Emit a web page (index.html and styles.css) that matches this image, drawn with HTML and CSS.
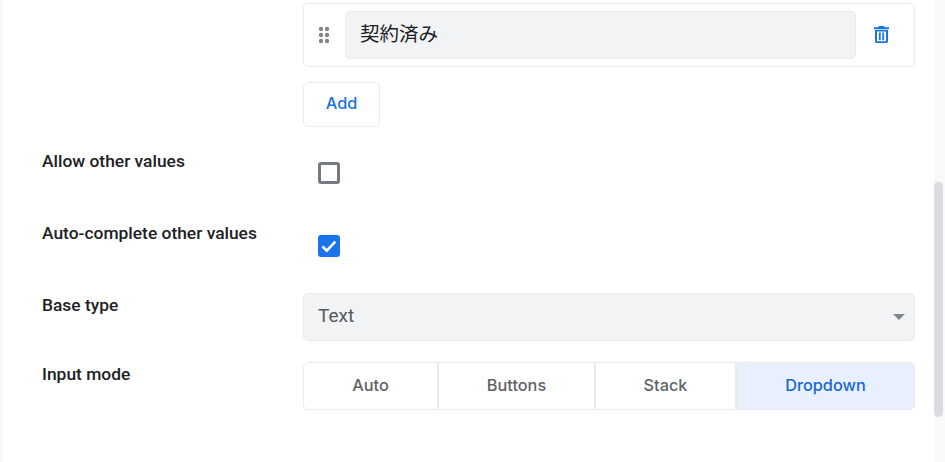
FILE: index.html
```html
<!DOCTYPE html>
<html lang="en">
<head>
<meta charset="utf-8">
<title>Column settings</title>
<link rel="stylesheet" href="styles.css">
</head>
<body>
<div class="shell">
  <main class="panel">
    <div class="row row-values">
      <div class="label"></div>
      <div class="field">
        <div class="value-card">
          <svg class="grip" width="12" height="18" viewBox="0 0 12 18" aria-hidden="true"><g fill="#80868b"><circle cx="3" cy="3" r="2.2"/><circle cx="9" cy="3" r="2.2"/><circle cx="3" cy="9" r="2.2"/><circle cx="9" cy="9" r="2.2"/><circle cx="3" cy="15" r="2.2"/><circle cx="9" cy="15" r="2.2"/></g></svg>
          <div class="value-input">契約済み</div>
          <svg class="trash" width="15" height="17" viewBox="0 0 15 17" aria-hidden="true"><path fill="#1a73e8" d="M5 0h5l.7 1.300H15v1.900H0V1.300h4.300zM1 4h13v11.200c0 1-.8 1.800-1.800 1.800H2.800C1.800 17 1 16.200 1 15.200zm2 1.400v9.600c0 .2.100.3.300.3h8.400c.2 0 .3-.1.300-.3V5.400zM4.900 6.500h1.800v7.700H4.900zm3.400 0h1.800v7.700H8.300z"/></svg>
        </div>
        <button class="add">Add</button>
      </div>
    </div>
    <div class="row row-allow">
      <div class="label">Allow other values</div>
      <div class="field"><span class="check"></span></div>
    </div>
    <div class="row row-auto">
      <div class="label">Auto-complete other values</div>
      <div class="field">
        <span class="check on"><svg width="22" height="22" viewBox="0 0 22 22" aria-hidden="true"><path d="M4.500 11.500l4.300 4.200 8.500-9" fill="none" stroke="#fff" stroke-width="2.600"/></svg></span>
      </div>
    </div>
    <div class="row row-base">
      <div class="label">Base type</div>
      <div class="field">
        <div class="select"><span class="select-text">Text</span><span class="caret"></span></div>
      </div>
    </div>
    <div class="row row-mode">
      <div class="label">Input mode</div>
      <div class="field">
        <div class="segments">
          <span class="seg seg-auto">Auto</span>
          <span class="seg seg-buttons">Buttons</span>
          <span class="seg seg-stack">Stack</span>
          <span class="seg seg-dropdown">Dropdown</span>
        </div>
      </div>
    </div>
  </main>
  <div class="track"><div class="thumb"></div></div>
</div>
</body>
</html>
```
FILE: styles.css
```css
* { box-sizing: border-box; }
html, body { margin: 0; height: 100%; overflow: hidden; }
body { background: #f8f9fa; font-family: Roboto, "Noto Sans CJK JP", sans-serif; color: #202124; }
.shell { display: flex; height: 462px; padding-left: 3px; }
.panel { width: 931px; background: #fff; padding: 3px 19px 0 39px; }
.row { display: grid; grid-template-columns: 261px 612px; }
.label { font-size: 17.400px; font-weight: 500; line-height: 20px; color: #202124; }
.value-card { display: flex; align-items: center; height: 64px; border: 1px solid #e8eaed; border-radius: 5px; padding: 0 0 0 14px; }
.grip { margin-right: 15px; flex: none; }
.value-input { width: 511px; height: 48px; margin-right: 18px; flex: none; background: #f1f3f4; border: 1px solid #e8eaed; border-radius: 5px; padding-left: 14px; font-size: 19.500px; line-height: 41px; color: #202124; font-family: "Noto Sans CJK JP", sans-serif; }
.trash { flex: none; margin-top: -2px; }
.add { display: block; width: 77px; height: 45px; margin-top: 15px; padding: 0 0 4px; background: #fff; border: 1px solid #e8eaed; border-radius: 5px; color: #1a73e8; font: 450 16.300px Inter, Roboto, sans-serif; }
.row-allow { margin-top: 24px; height: 72px; }
.row-auto { height: 70px; }
.row-base { height: 69px; }
.row-base .label { margin-top: 2px; }
.row-mode .label { margin-top: 2px; }
.check { display: block; width: 22px; height: 22px; margin: 11px 0 0 15px; border: 3px solid #757a7f; border-radius: 3px; background: #fff; }
.check.on { background: #1a73e8; border: 0; }
.check svg { display: block; }
.row-auto .check { margin-top: 12px; }
.select { display: flex; align-items: center; justify-content: space-between; height: 48px; background: #f1f3f4; border: 1px solid #e8eaed; border-radius: 5px; padding: 0 9px 0 14px; font: 400 19px Roboto, sans-serif; color: #55595e; }
.select-text { margin-top: -4px; }
.caret { width: 0; height: 0; border-left: 6px solid transparent; border-right: 6px solid transparent; border-top: 6px solid #80868b; }
.segments { display: flex; height: 48px; border: 1px solid #e8eaed; border-radius: 5px; overflow: hidden; }
.seg { display: flex; align-items: center; justify-content: center; padding-bottom: 2px; font: 450 16.300px Inter, Roboto, sans-serif; color: #5f6368; border-right: 2px solid #e8eaed; }
.seg-auto { width: 135px; }
.seg-buttons { width: 157px; }
.seg-stack { width: 141px; }
.seg-dropdown { flex: 1; border-right: 0; background: #e8f0fe; color: #1967d2; }
.track { width: 11px; padding-top: 182px; }
.thumb { width: 9px; height: 235px; background: #dadce0; border-radius: 5px; }
```
